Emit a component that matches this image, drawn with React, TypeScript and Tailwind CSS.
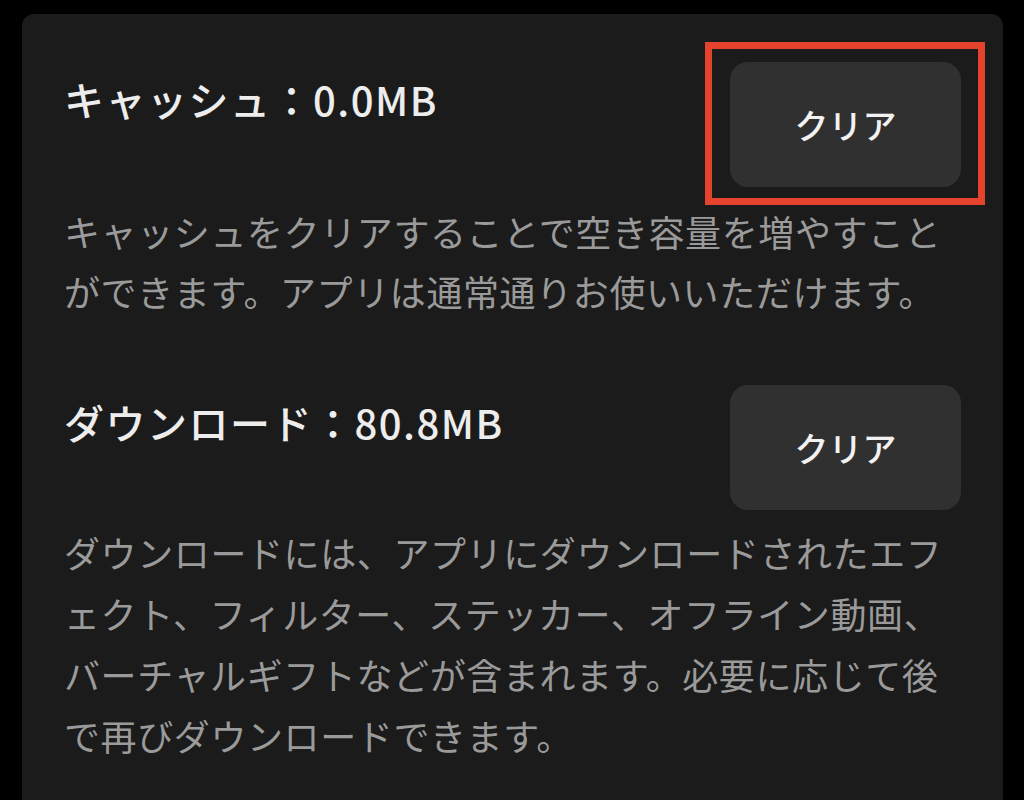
import React from "react";

const jp = "font-['Noto_Sans_CJK_JP','Noto_Sans',sans-serif]";

const ClearButton = ({ marked }: { marked?: boolean }) => (
  <div className="relative shrink-0">
    {marked && (
      <span className="pointer-events-none absolute -left-[25px] -top-[20px] -right-[24px] -bottom-[18px] border-[7px] border-[#e5432d]" />
    )}
    <button className="flex h-[125px] w-[231px] items-center justify-center rounded-[18px] bg-[#303030] text-[34px] font-medium text-[#f2f2f2]">
      クリア
    </button>
  </div>
);

export default function App() {
  return (
    <div className={`h-screen overflow-hidden bg-black pt-[14px] pl-[22px] pr-[21px] ${jp}`}>
      <section className="flex h-full flex-col rounded-t-[12px] bg-[#1b1b1b] pl-[42px] pr-[42px] pt-[48px]">
        <div className="flex items-start justify-between">
          <h2 className="pt-[8px] text-[40px] leading-[58px] tracking-[1.5px] font-medium text-[#ededed]">
            キャッシュ：0.0MB
          </h2>
          <ClearButton marked />
        </div>
        <p className="mt-[14px] text-[36px] leading-[60px] tracking-[0.6px] text-[#9a9a9a] whitespace-nowrap">
          キャッシュをクリアすることで空き容量を増やすこと
          <br />
          ができます。アプリは通常通りお使いいただけます。
        </p>

        <div className="mt-[64px] flex items-start justify-between">
          <h2 className="pt-[8px] text-[40px] leading-[58px] tracking-[1.5px] font-medium text-[#ededed]">
            ダウンロード：80.8MB
          </h2>
          <ClearButton />
        </div>
        <p className="mt-[12px] text-[36px] leading-[61px] tracking-[0.6px] text-[#9a9a9a] whitespace-nowrap">
          ダウンロードには、アプリにダウンロードされたエフ
          <br />
          ェクト、フィルター、ステッカー、オフライン動画、
          <br />
          バーチャルギフトなどが含まれます。必要に応じて後
          <br />
          で再びダウンロードできます。
        </p>
      </section>
    </div>
  );
}
